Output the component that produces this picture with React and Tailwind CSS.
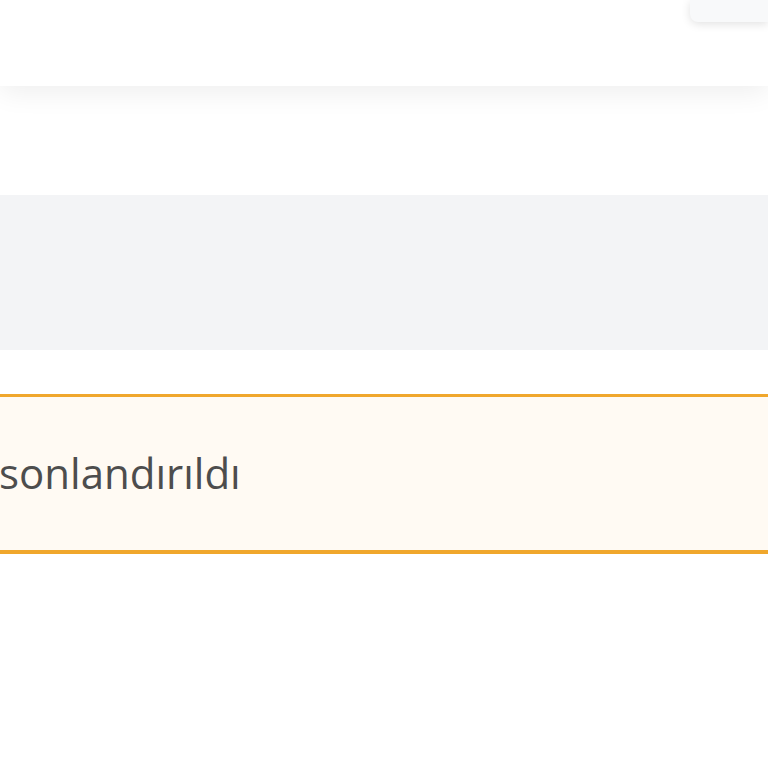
export default function App() {
    return (
        <div className="w-[768px] h-[768px] overflow-hidden bg-white font-['Open_Sans',sans-serif]">
            {/* header */}
            <header className="relative h-[86px] bg-white shadow-[0_6px_28px_rgba(0,0,0,0.07)] z-10">
                <div className="absolute right-0 top-0 w-[78px] h-[22px] bg-[#f8f9fa] rounded-bl-lg shadow-[0_2px_10px_rgba(0,0,0,0.12)]" />
            </header>

            <div className="pt-[109px]">
                <div className="h-[155px] bg-[#f3f4f6]" />

                <div className="mt-[44px] h-[160px] bg-[#fffaf3] border-t-[3px] border-b-[4px] border-[#f0a72c] flex items-center">
                    <span className="-ml-[1px] text-[42px] leading-none text-[#4d4d4d] pb-[2px]">
                        sonlandırıldı
                    </span>
                </div>
            </div>
        </div>
    );
}
